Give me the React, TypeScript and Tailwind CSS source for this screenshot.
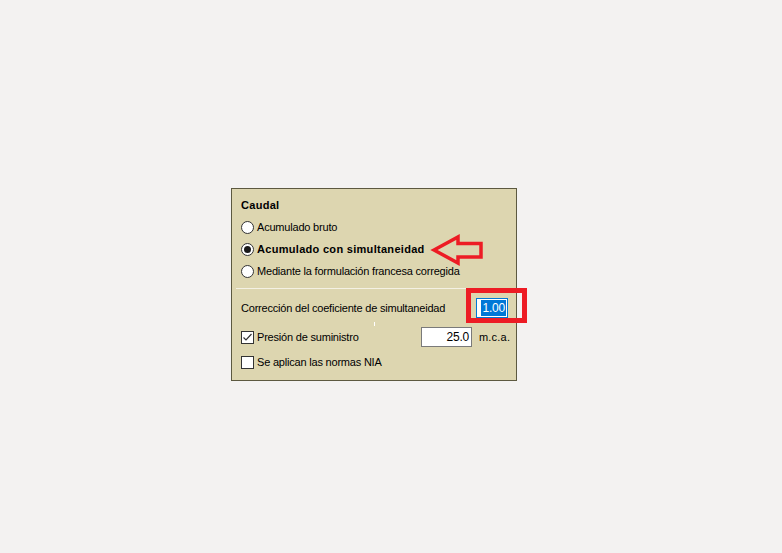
import React from "react";

const font = { fontFamily: '"Liberation Sans", Arial, sans-serif' };

function Radio({ checked }: { checked?: boolean }) {
  return (
    <span className="flex h-[13px] w-[13px] shrink-0 items-center justify-center rounded-full border border-[#333333] bg-white">
      {checked && <span className="h-[7px] w-[7px] rounded-full bg-[#1a1a1a]" />}
    </span>
  );
}

function Check({ checked }: { checked?: boolean }) {
  return (
    <span className="flex h-[13px] w-[13px] shrink-0 items-center justify-center border border-[#333333] bg-white">
      {checked && (
        <svg width="11" height="11" viewBox="0 0 11 11">
          <path d="M1.5 5.5 L4 8 L9.5 2" fill="none" stroke="#333333" strokeWidth="1.2" />
        </svg>
      )}
    </span>
  );
}

export default function App() {
  return (
    <div className="relative min-h-[553px] w-[782px] bg-[#f3f2f1] pl-[231px] pt-[188px] text-black" style={font}>
      <div className="relative flex h-[193px] w-[286px] flex-col border border-[#5c5940] bg-[#ddd6b0] pt-[5px]">
        <div className="flex h-[22px] items-center pl-[9px] text-[11px] font-bold tracking-[0.3px]">Caudal</div>
        <div className="flex h-[22px] items-center gap-[3px] pl-[9px] text-[11px] tracking-[-0.2px]">
          <Radio />
          <span>Acumulado bruto</span>
        </div>
        <div className="flex h-[22px] items-center gap-[3px] pl-[9px] text-[11px] font-bold tracking-[0.3px]">
          <Radio checked />
          <span>Acumulado con simultaneidad</span>
        </div>
        <div className="flex h-[22px] items-center gap-[3px] pl-[9px] text-[11px] tracking-[-0.2px]">
          <Radio />
          <span>Mediante la formulación francesa corregida</span>
        </div>
        <div className="mx-[4px] mt-[6px] h-px bg-[#f4f1e4]" />
        <div className="mt-[8px] flex h-[22px] items-center justify-between pl-[9px] pr-[8px] text-[11px] tracking-[-0.2px]">
          <span>Corrección del coeficiente de simultaneidad</span>
          <div className="flex h-[20px] w-[32px] items-center justify-end border border-[#0078d7] bg-white pr-[1px]">
            <span className="flex h-[16px] items-center bg-[#0078d7] px-[1px] text-[12px] tracking-[-0.2px] text-white">1.00</span>
          </div>
        </div>
        <div className="absolute left-[142px] top-[133px] h-[4px] w-px bg-white" />
        <div className="mt-[7px] flex h-[22px] items-center pl-[9px] text-[11px] tracking-[-0.2px]">
          <div className="flex flex-1 items-center gap-[3px]">
            <Check checked />
            <span>Presión de suministro</span>
          </div>
          <div className="flex h-[20px] w-[51px] items-center justify-end border border-[#7a7a7a] bg-white pr-[2px] text-[12px] tracking-[-0.2px]">25.0</div>
          <span className="ml-[7px] w-[37px] text-[11px] tracking-[0.2px]">m.c.a.</span>
        </div>
        <div className="mt-[3px] flex h-[22px] items-center gap-[3px] pl-[9px] text-[11px] tracking-[-0.2px]">
          <Check />
          <span>Se aplican las normas NIA</span>
        </div>
      </div>

      {/* annotation overlays */}
      <div className="absolute left-[466px] top-[288px] h-[35px] w-[61px] border-[5px] border-[#ed1c24]" />
      <svg className="absolute left-[430px] top-[233px]" width="55" height="34" viewBox="0 0 55 34">
        <polygon
          points="4,17 28,4 28,10.5 51,10.5 51,24 28,24 28,30"
          fill="none"
          stroke="#ed1c24"
          strokeWidth="3.5"
          strokeLinejoin="miter"
        />
      </svg>
    </div>
  );
}
